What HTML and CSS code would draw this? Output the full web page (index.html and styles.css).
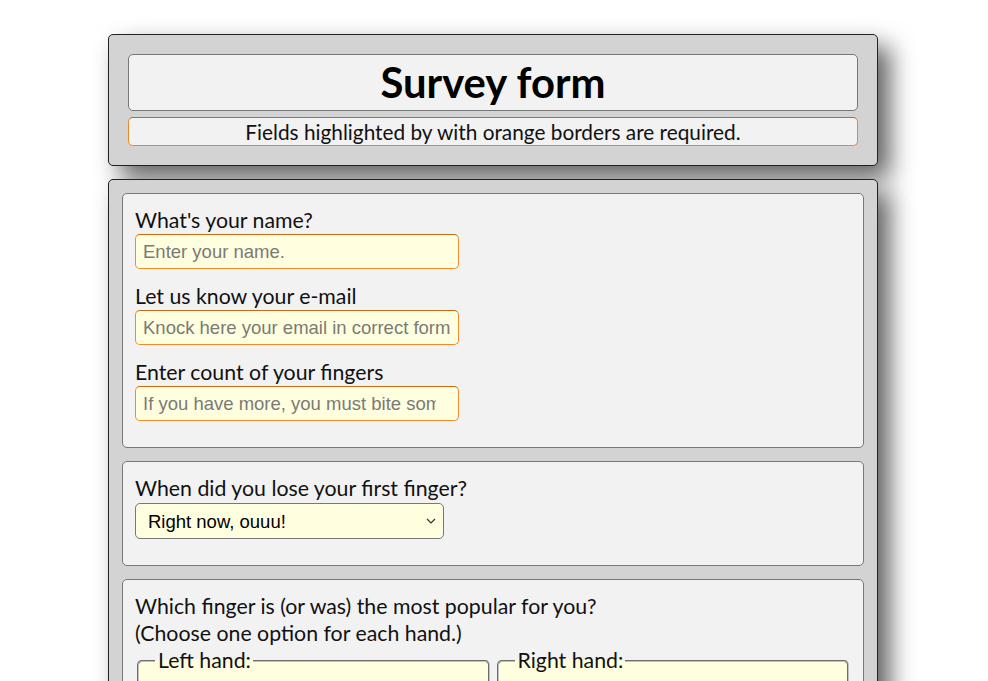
FILE: index.html
```html
<!DOCTYPE html>
<html lang="en">
<head>
<meta charset="utf-8">
<title>Survey form</title>
<link rel="stylesheet" href="styles.css">
</head>
<body>
<div class="page">
  <header class="panel header">
    <h1 class="title" id="title">Survey form</h1>
    <p class="notice" id="description">Fields highlighted by with orange borders are required.</p>
  </header>

  <form class="panel form" id="survey-form">
    <section class="card">
      <div class="field">
        <label class="label" for="name" id="name-label">What's your name?</label>
        <input class="input" type="text" id="name" placeholder="Enter your name." required>
      </div>
      <div class="field">
        <label class="label" for="email" id="email-label">Let us know your e-mail</label>
        <input class="input" type="email" id="email" placeholder="Knock here your email in correct format." required>
      </div>
      <div class="field">
        <label class="label" for="number" id="number-label">Enter count of your fingers</label>
        <input class="input" type="number" id="number" placeholder="If you have more, you must bite some off." required>
      </div>
    </section>

    <section class="card">
      <div class="field">
        <label class="label" for="dropdown">When did you lose your first finger?</label>
        <div class="select-wrap">
          <select class="select" id="dropdown">
            <option>Right now, ouuu!</option>
            <option>Yesterday</option>
            <option>Long time ago</option>
            <option>Never</option>
          </select>
          <svg class="chevron" width="10" height="6" viewBox="0 0 10 6" aria-hidden="true">
            <path d="M1 1 L5 5 L9 1" fill="none" stroke="#333" stroke-width="1.2"/>
          </svg>
        </div>
      </div>
    </section>

    <section class="card">
      <p class="question">Which finger is (or was) the most popular for you?<br>(Choose one option for each hand.)</p>
      <div class="hands">
        <fieldset class="hand">
          <legend class="legend">Left hand:</legend>
          <label class="option"><input type="radio" name="left" value="thumb"> Thumb</label>
          <label class="option"><input type="radio" name="left" value="index"> Index finger</label>
          <label class="option"><input type="radio" name="left" value="middle"> Middle finger</label>
        </fieldset>
        <fieldset class="hand">
          <legend class="legend">Right hand:</legend>
          <label class="option"><input type="radio" name="right" value="thumb"> Thumb</label>
          <label class="option"><input type="radio" name="right" value="index"> Index finger</label>
          <label class="option"><input type="radio" name="right" value="middle"> Middle finger</label>
        </fieldset>
      </div>
    </section>
  </form>
</div>
</body>
</html>
```

FILE: styles.css
```css
* {
  box-sizing: border-box;
}

html, body {
  margin: 0;
  padding: 0;
  background: #ffffff;
}

body {
  font-family: "Lato", "Open Sans", sans-serif;
  font-size: 21.3px;
  color: #111111;
}

.page {
  width: 770px;
  margin: 0 0 0 calc(50% - 386px);
  padding: 34px 0 40px;
  display: flex;
  flex-direction: column;
  gap: 13px;
}

.panel {
  background: #d3d3d3;
  border: 1px solid #222222;
  border-radius: 5px;
  box-shadow: 12px 12px 24px rgba(0, 0, 0, 0.62);
}

.header {
  padding: 19px 19px 19px;
  display: flex;
  flex-direction: column;
  gap: 6px;
}

.title {
  margin: 0;
  background: #f2f2f2;
  border: 1px solid #777777;
  border-radius: 5px;
  text-align: center;
  font-size: 41.8px;
  font-weight: 700;
  line-height: 55px;
  color: #000000;
}

.notice {
  margin: 0;
  background: #f2f2f2;
  border: 1px solid #e8892a;
  border-top-color: #c46a14;
  border-radius: 5px;
  text-align: center;
  font-size: 20.8px;
  line-height: 27px;
}

.form {
  padding: 13px;
  display: flex;
  flex-direction: column;
  gap: 13px;
}

.card {
  background: #f2f2f2;
  border: 1px solid #777777;
  border-radius: 5px;
  padding: 13px 12px 26px;
  display: flex;
  flex-direction: column;
  gap: 14px;
}

.field {
  display: flex;
  flex-direction: column;
  align-items: flex-start;
}

.label {
  line-height: 27px;
}

.input {
  width: 324px;
  height: 35px;
  margin: 0;
  padding: 0 7px;
  background: #ffffe0;
  border: 1px solid #ef8d2c;
  border-top-color: #c46a14;
  border-radius: 5px;
  font-family: "Liberation Sans", Arial, sans-serif;
  font-size: 18.5px;
  color: #222222;
  outline: none;
}

.input::placeholder {
  color: #7a7a76;
}

.select-wrap {
  position: relative;
  margin-top: 1px;
}

.select {
  display: block;
  width: 309px;
  height: 36px;
  margin: 0;
  padding: 0 12px;
  appearance: none;
  -webkit-appearance: none;
  background-color: #ffffe0;
  border: 1px solid #777777;
  border-radius: 5px;
  font-family: "Liberation Sans", Arial, sans-serif;
  font-size: 18.5px;
  color: #000000;
}

.chevron {
  position: absolute;
  right: 8px;
  top: 15px;
  pointer-events: none;
}

.question {
  margin: 0;
  line-height: 27px;
}

.hands {
  display: flex;
  gap: 3px;
  margin-top: -14px;
}

.hand {
  flex: 1;
  margin: 0 2px;
  padding: 4px 16px 12px;
  background: #ffffe0;
  border: 2px groove #c0c0c0;
  border-radius: 5px;
  display: flex;
  flex-direction: column;
  gap: 6px;
}

.legend {
  padding: 0 2px 0 3px;
  line-height: 27px;
}

.option {
  line-height: 27px;
}
```
